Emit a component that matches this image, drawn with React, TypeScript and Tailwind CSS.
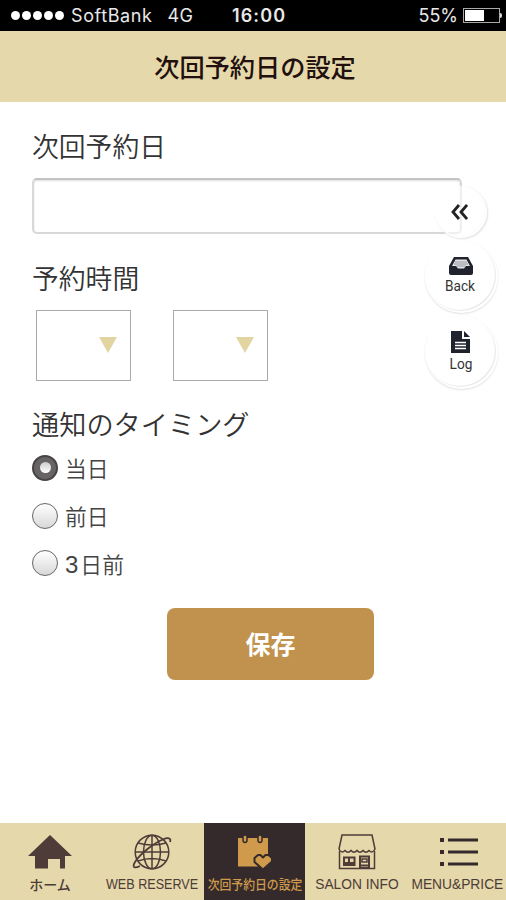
import type { ReactNode } from 'react';

const JP = "font-['Noto_Sans_CJK_JP',sans-serif]";

const TIMINGS = ['当日', '前日', '3日前'];

function HomeIcon() {
  return (
    <svg width="44" height="34" viewBox="0 0 44 34" fill="#4d3c38">
      <path d="M22 0 44 21H37V33.5H32V24H20V33.5H7V21H0Z" />
    </svg>
  );
}

function GlobeIcon() {
  return (
    <svg width="40" height="36" viewBox="0 0 40 36" fill="none" stroke="#4d3c38" strokeWidth="1.5">
      <circle cx="20" cy="18" r="16.8" />
      <ellipse cx="20" cy="18" rx="8.5" ry="16.8" />
      <path d="M20 1V35M3 18H37M6 9Q20 13 34 9M6 27Q20 22 34 27" />
      <path d="M31 5.5C36 3 39.5 4 38 8M31 5.5C22 9 8 20 3 28C0 33 2 35 8 32" strokeWidth="1.8" />
    </svg>
  );
}

function CalendarIcon() {
  return (
    <svg width="36" height="36" viewBox="0 0 36 36">
      <path d="M1 4H31V32.5H1Z" fill="#cf9a4c" />
      <path d="M6 2Q8 0 10 2V7Q8 10 6 7ZM21 2Q23 0 25 2V7Q23 10 21 7Z" fill="#cf9a4c" stroke="#352a2b" strokeWidth="1.5" />
      <path d="M26 35.5 17.5 28V24L21 21H23.5L26 23.5 28.5 21H31.5L35 24V27.5Z" fill="#cf9a4c" stroke="#352a2b" strokeWidth="2" strokeLinejoin="round" />
    </svg>
  );
}

function ShopIcon() {
  return (
    <svg width="38" height="36" viewBox="0 0 38 36" fill="none" stroke="#4d3c38" strokeWidth="1.5">
      <path d="M4 1H34L37 15Q34.5 20 31 16.5Q28 20 25 16.5Q22 20 19 16.5Q16 20 13 16.5Q10 20 7 16.5Q3.5 20 1 15Z" />
      <path d="M1.5 17V34.5H36.5V17" />
      <path d="M6 23.5H16.5V31H6ZM11 23.5V31M22 22.5H31V34H22Z" strokeWidth="2" />
      <path d="M24 25H29V28H24Z" />
      <path d="M6 29H16.5M22 31.5H31" strokeWidth="2" />
    </svg>
  );
}

function ListIcon() {
  return (
    <svg width="38" height="30" viewBox="0 0 38 30" fill="#352a2b" className="ml-1">
      <path d="M0 1H4V5H0ZM8 1.5H38V4.5H8ZM0 13H4V17H0ZM8 13.5H38V16.5H8ZM0 25H4V29H0ZM8 25.5H38V28.5H8Z" />
    </svg>
  );
}

function TrayIcon() {
  return (
    <svg width="24" height="18" viewBox="0 0 24 18">
      <path d="M5 0H19L24 9V16Q24 18 22 18H2Q0 18 0 16V9Z" fill="#20222e" />
      <path d="M6.5 2.5H17.5L21 9H17L15 11.5H9L7 9H3Z" fill="#e4e4e6" />
      <path d="M6 5H18M5 7H19M7.5 9H16.5" stroke="#82848c" strokeWidth="0.8" />
    </svg>
  );
}

function LogIcon() {
  return (
    <svg width="19" height="22" viewBox="0 0 19 22">
      <path d="M0 0H11V8H19V22H0Z" fill="#20222e" />
      <path d="M13 0 19 6H13Z" fill="#20222e" />
      <path d="M4 11.5H15M4 14.5H15M4 17.5H15" stroke="#fff" strokeWidth="1.3" />
    </svg>
  );
}

function SelectBox() {
  return (
    <button className="flex h-[71px] w-[95px] items-center justify-end border border-[#aaa] bg-white pb-0.5 pr-[13px]">
      <svg width="18" height="16" viewBox="0 0 18 16">
        <path d="M0 0H18L9 16Z" fill="#e2d5a2" />
      </svg>
    </button>
  );
}

function FloatButton({ icon, label }: { icon: ReactNode; label: string }) {
  return (
    <button className="flex h-[71px] w-[71px] flex-col items-center justify-center rounded-full bg-white shadow-[1px_1px_0_1px_#fff,1px_2px_2px_1px_#e0e0e0,inset_-1px_-1px_1px_#e8e8e8]">
      {icon}
      <span className="mt-0.5 scale-x-[0.88] font-['Roboto',sans-serif] text-[15.5px] leading-[18px] text-[#333]">{label}</span>
    </button>
  );
}

function NavItem({ icon, label, labelClass, active }: { icon: ReactNode; label: string; labelClass: string; active?: boolean }) {
  return (
    <button className={`flex min-w-0 flex-col items-center pt-2.5 ${active ? 'bg-[#352a2b] text-[#cf9a4c]' : 'text-[#4d3c38]'}`}>
      <span className="flex h-[38px] items-center justify-center">{icon}</span>
      <span className={`mt-1 whitespace-nowrap leading-[18px] ${labelClass}`}>{label}</span>
    </button>
  );
}

export default function App() {
  return (
    <div className={`relative flex h-[900px] w-[506px] flex-col overflow-hidden bg-white ${JP}`}>
      {/* Status bar */}
      <div className="grid h-[31px] shrink-0 grid-cols-[1fr_54px_1fr] items-center bg-black font-['Inter',sans-serif] text-[18px] text-[#e8e8e8]">
        <div className="flex items-center pl-[11px]">
          <div className="flex gap-[2px]">
            {[0, 1, 2, 3, 4].map((i) => (
              <span key={i} className="h-[9px] w-[9px] rounded-full bg-white" />
            ))}
          </div>
          <span className="ml-[7px] tracking-[0.6px]">SoftBank</span>
          <span className="ml-[15px] tracking-[0.4px]">4G</span>
        </div>
        <span className="ml-1.5 whitespace-nowrap text-center font-semibold tracking-[1.1px]">16:00</span>
        <div className="flex items-center justify-end pr-1">
          <span>55%</span>
          <span className="ml-[5px] flex h-[15px] w-[37px] border border-[#aaa] p-px">
            <span className="w-[19px] bg-white" />
          </span>
          <span className="h-[5px] w-[2px] rounded-r-full bg-[#ddd]" />
        </div>
      </div>

      <header className="flex h-[71px] shrink-0 items-center justify-center bg-[#e5d8aa]">
        <h1 className="pl-1 text-[25.2px] font-medium leading-none text-[#21100e]">次回予約日の設定</h1>
      </header>

      <main className="flex flex-1 flex-col pl-8">
        <label className="mt-[26px] h-9 text-[26.8px] font-[350] leading-9 text-[#333]">次回予約日</label>
        <input className="mt-[14px] h-14 w-[430px] shrink-0 rounded-[5px] border-2 border-[#d8d8d8] border-t-[#c4c4c4] shadow-[inset_0_1px_2px_#ddd]" />

        <label className="mt-[26px] h-9 text-[26.8px] font-[350] leading-9 text-[#333]">予約時間</label>
        <div className="mt-[14px] flex gap-[42px] pl-1">
          <SelectBox />
          <SelectBox />
        </div>

        <div className="mt-6 h-9 text-[27.2px] font-[350] leading-9 text-[#333]">通知のタイミング</div>
        <div className="mt-[3px] flex flex-col">
          {TIMINGS.map((timing, i) => (
            <label key={timing} className="flex h-[47.8px] items-center gap-[7px]">
              {i === 0 ? (
                <span className="flex h-[26px] w-[26px] items-center justify-center rounded-full border-2 border-[#444] bg-[#686466]">
                  <span className="h-[11px] w-[11px] rounded-full bg-linear-to-b from-[#ccc] to-white" />
                </span>
              ) : (
                <span className="h-[26px] w-[26px] rounded-full border-[1.5px] border-[#666] bg-linear-to-b from-white to-[#d8d8d8]" />
              )}
              <span className="pt-px text-[21.8px] font-[350] text-[#444]">
                {timing.startsWith('3') ? (
                  <>
                    <span className="mr-0.5 font-['Liberation_Sans',sans-serif] text-[24px] leading-none">3</span>
                    {timing.slice(1)}
                  </>
                ) : (
                  timing
                )}
              </span>
            </label>
          ))}
        </div>

        <button className="ml-[135px] mt-[21px] h-[72px] w-[207px] rounded-lg bg-[#c1924d] pb-0.5 text-[25px] font-bold text-white">保存</button>
      </main>

      {/* Floating shortcuts */}
      <div className="absolute left-[434px] top-[186px] flex w-[52px] items-center justify-center">
        <button className="flex h-[50px] w-[50px] items-center justify-center rounded-full bg-white/60 shadow-[1px_1px_0_1px_#fff,2px_2px_2px_1px_#e0e0e0]">
          <svg width="17" height="16" viewBox="0 0 17 16" fill="none" stroke="#222" strokeWidth="2.8" className="mr-0.5 mt-0.5">
            <path d="M8 1 2 8 8 15M16 1 10 8 16 15" />
          </svg>
        </button>
      </div>
      <div className="absolute left-[425px] top-[240px] flex flex-col gap-[5px]">
        <FloatButton icon={<TrayIcon />} label="Back" />
        <FloatButton icon={<LogIcon />} label="Log" />
      </div>

      <nav className="grid h-[77px] shrink-0 grid-cols-[100px_104px_101px_103px_98px] bg-[#e5d8aa]">
        <NavItem icon={<HomeIcon />} label="ホーム" labelClass="text-[14px] font-medium" />
        <NavItem icon={<GlobeIcon />} label="WEB RESERVE" labelClass="font-['Liberation_Sans',sans-serif] text-[14.5px] scale-x-[0.87]" />
        <NavItem icon={<CalendarIcon />} label="次回予約日の設定" labelClass="text-[13px] font-medium scale-x-[0.91]" active />
        <NavItem icon={<ShopIcon />} label="SALON INFO" labelClass="font-['Liberation_Sans',sans-serif] text-[14.5px] scale-x-[0.95]" />
        <NavItem icon={<ListIcon />} label="MENU&PRICE" labelClass="font-['Liberation_Sans',sans-serif] text-[14.5px] scale-x-[0.95]" />
      </nav>
    </div>
  );
}
